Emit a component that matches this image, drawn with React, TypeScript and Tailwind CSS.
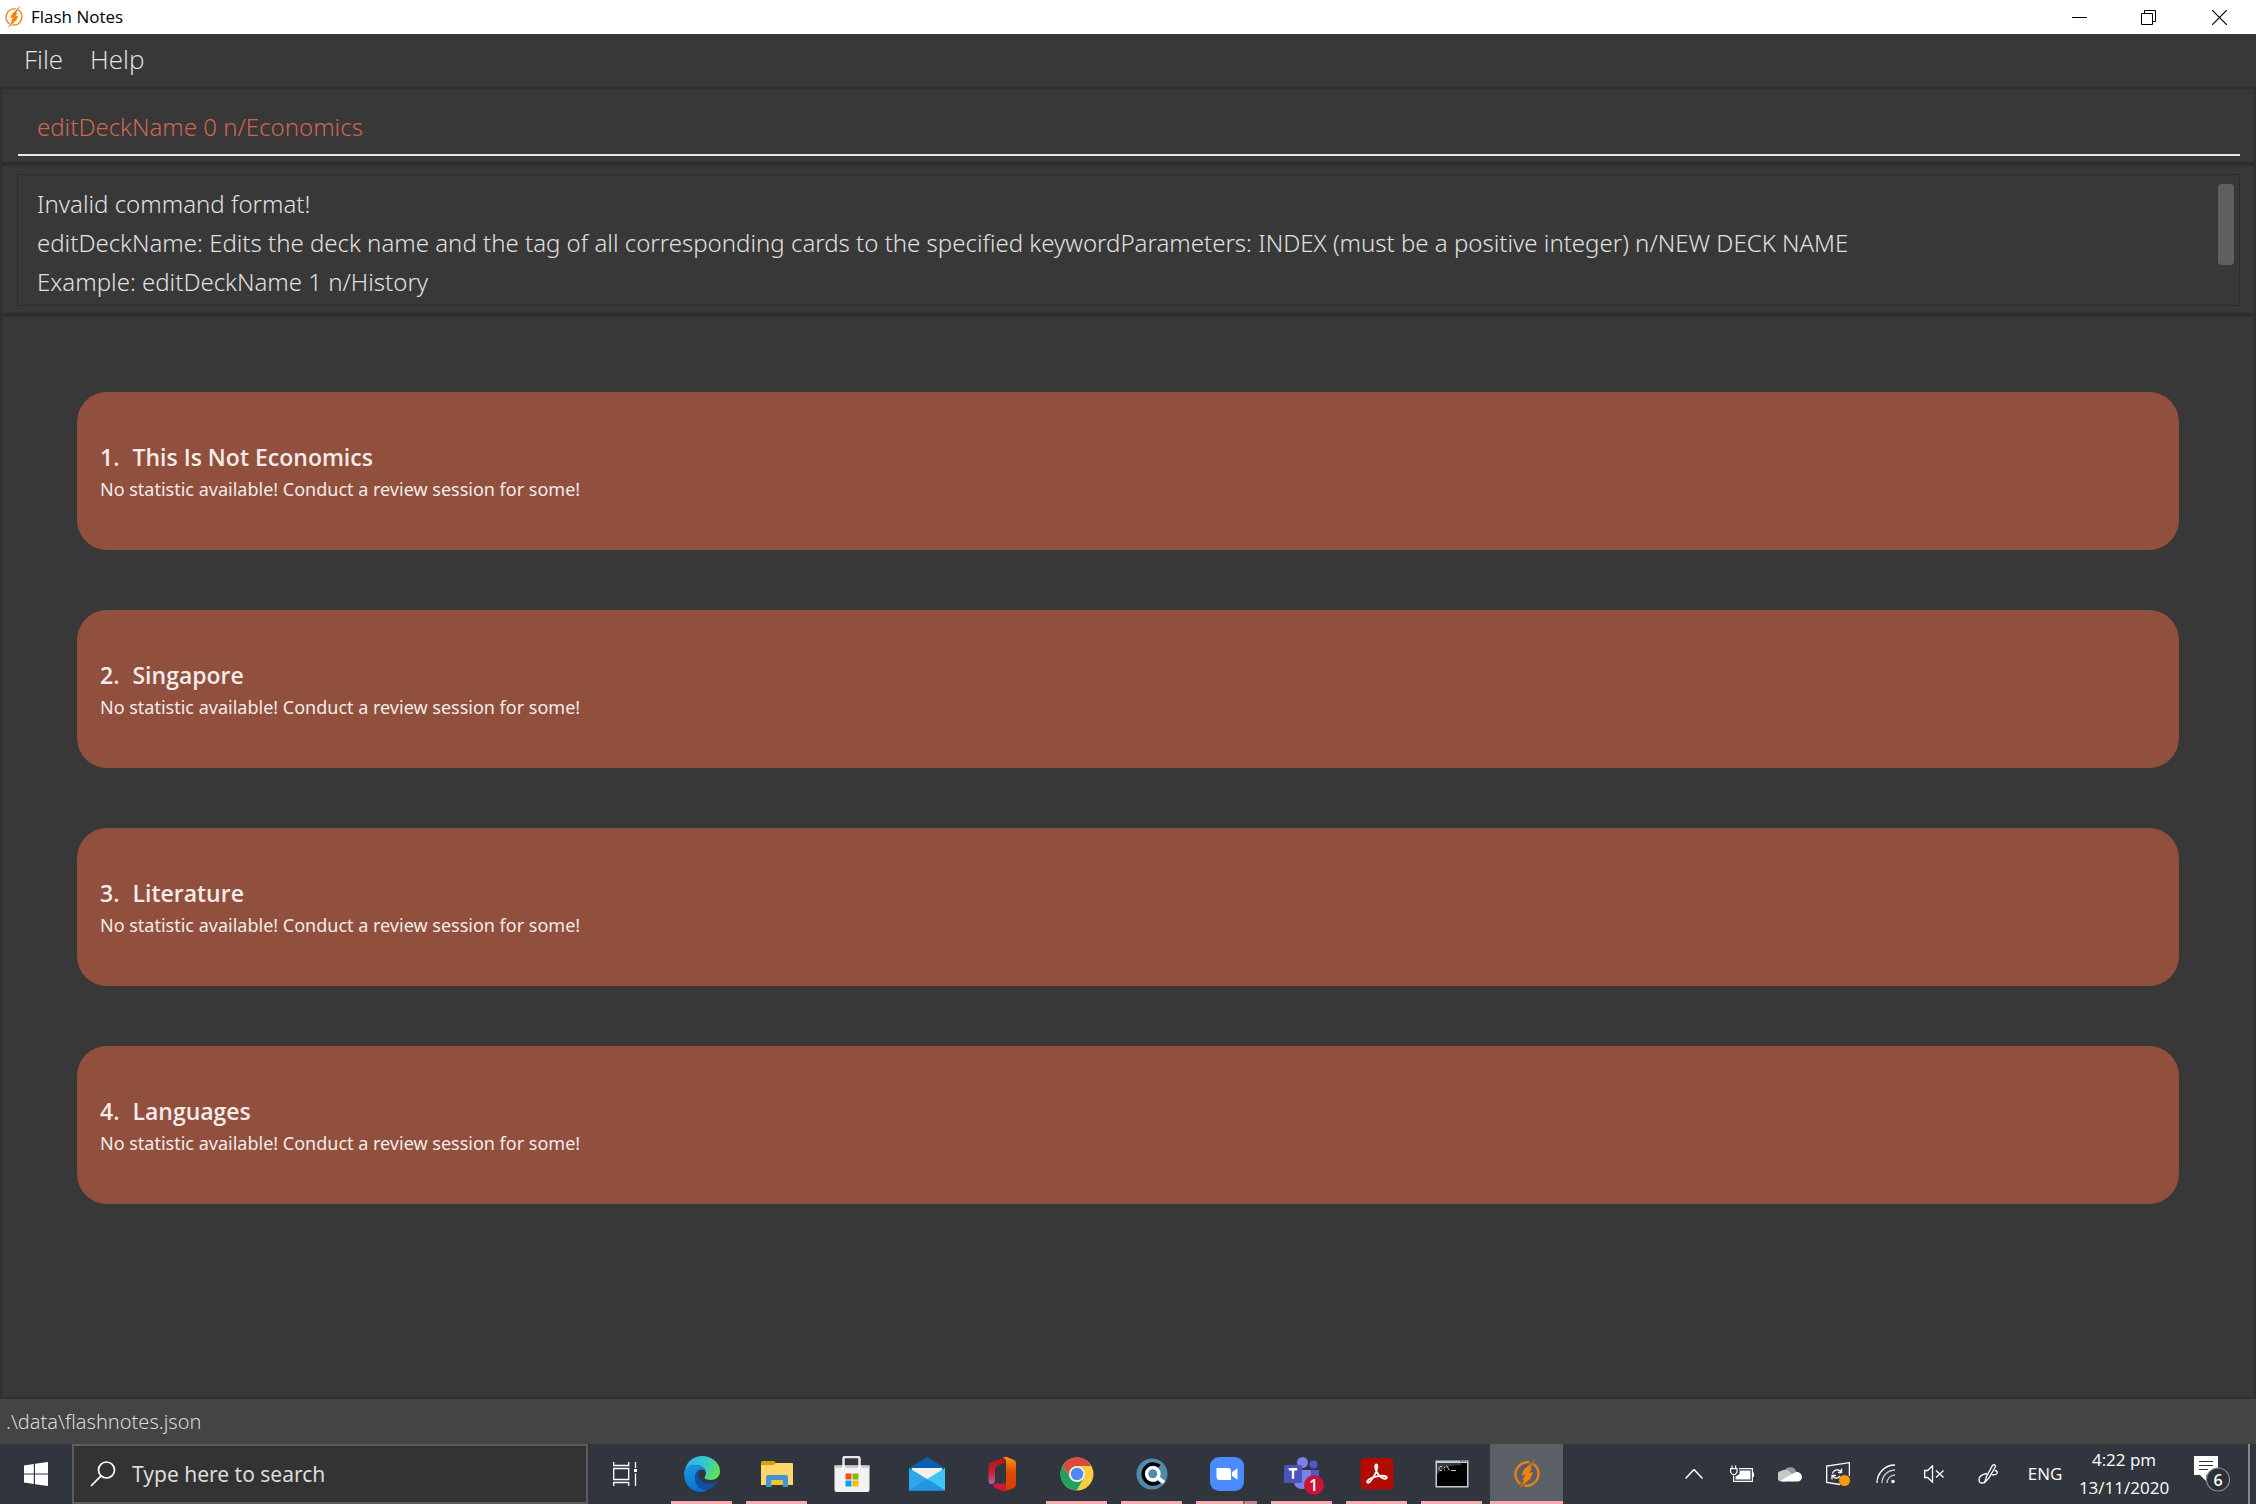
import type { ReactNode } from "react";

const decks = ["This Is Not Economics", "Singapore", "Literature", "Languages"];

const result = [
  "Invalid command format!",
  "editDeckName: Edits the deck name and the tag of all corresponding cards to the specified keywordParameters: INDEX (must be a positive integer) n/NEW DECK NAME",
  "Example: editDeckName 1 n/History",
].join("\n");

function FlashLogo({ className }: { className: string }) {
  return (
    <svg viewBox="0 0 28 32" className={className} aria-hidden="true">
      <path d="M16.500 4.400A12 12 0 0 0 7.500 26M20.500 6A12 12 0 0 1 11.500 27.600" fill="none" stroke="#f5820b" strokeWidth="2.200" />
      <path d="M22.500 1 11 11.500 8.600 17.500 12.500 16.800 9.400 22 11.500 21.600 6 31 17.600 20.200 20 14.200 16.200 15 19 10 16.900 10.300Z" fill="#f5820b" />
      <path d="M22.500 1 16.500 7.500M11.500 24.500 6 31" stroke="#9c5a1e" strokeWidth="0.900" />
    </svg>
  );
}

function EdgeIcon() {
  return (
    <svg viewBox="0 0 36 36" className="size-9" aria-hidden="true">
      <defs>
        <linearGradient id="edgeTop" x1="0" y1="0.300" x2="1" y2="0.600">
          <stop offset="0" stopColor="#2fb2ee" />
          <stop offset="0.550" stopColor="#35c9c9" />
          <stop offset="1" stopColor="#66e34c" />
        </linearGradient>
        <linearGradient id="edgeLow" x1="0" y1="0" x2="0.400" y2="1">
          <stop offset="0" stopColor="#1b9de2" />
          <stop offset="1" stopColor="#0a6fd0" />
        </linearGradient>
      </defs>
      <path d="M1 14C3 5 10 0 18 0c10 0 18 7 18 15 0 6-4.500 9-9.500 9-3.500 0-6-1-6-2.500 0-1 1.500-1.700 1.500-4.500C22 12 17 9 11 9 6 9 3 11 1 14Z" fill="url(#edgeTop)" />
      <path d="M0 18C0 12 5 9 11 9c6 0 11 3.500 11 8 0-2-2-3.500-4.500-3.500C14 13.500 11 17 11 21.500c0 7 5.500 12.500 12 12.500-1.500 1.200-3.500 2-6 2C7 36 0 28 0 18Z" fill="url(#edgeLow)" />
      <path d="M17.500 13.500C14 13.500 11 17 11 21.500 11 29 17 35 23 34c4-1 8-4 10-7.500.3-.6-.3-.9-.8-.6C25 29.500 14.500 26 14.500 18.500c0-2 1.200-4 3-5Z" fill="#11509f" />
    </svg>
  );
}

function FolderIcon() {
  return (
    <svg viewBox="0 0 32 28" className="h-7 w-8" aria-hidden="true">
      <path d="M0 1.500Q0 1 1 1h12l2 2v4H0Z" fill="#dd9b06" />
      <path d="M0 5h12.500l2.500-2h16q1 0 1 1v21H0Z" fill="#ffd768" />
      <path d="M5 27V17q0-2 2-2h18q2 0 2 2v10h-5v-7H10.500v7Z" fill="#3f95d8" />
      <path d="M10.500 20H22v5H10.500Z" fill="#fdc12f" />
    </svg>
  );
}

function StoreIcon() {
  return (
    <svg viewBox="0 0 36 36" className="size-9" aria-hidden="true">
      <path d="M9.500 11V3q0-2 2-2h12q2 0 2 2v8" fill="none" stroke="#e9e9e9" strokeWidth="2.500" />
      <path d="M.5 9.500h35V34q0 2-2 2h-31q-2 0-2-2Z" fill="#f3f3f3" />
      <path d="M.5 9.500h35V12H.5Z" fill="#cfcfcf" />
      <path d="M8.300 9.500h2.500V13H8.300ZM24.300 9.500h2.500V13h-2.500Z" fill="#fff" />
      <path d="M11.500 17.500h6v6h-6Z" fill="#f1511b" />
      <path d="M18.500 17.500h6v6h-6Z" fill="#80bb03" />
      <path d="M11.500 24.500h6v6h-6Z" fill="#00a3ee" />
      <path d="M18.500 24.500h6v6h-6Z" fill="#fdb900" />
    </svg>
  );
}

function MailIcon() {
  return (
    <svg viewBox="0 0 36 34" className="h-[34px] w-9" aria-hidden="true">
      <path d="M0 11 18 0l18 11v4H0Z" fill="#0a5fae" />
      <path d="M3 11h30v6L18 25 3 17Z" fill="#f1f1f1" />
      <path d="M0 11v22.500h36L18 22Z" fill="#2ea6e8" />
      <path d="M36 11v22.500L18 22Z" fill="#3fc4f5" />
      <path d="M0 33.500 18 22l18 11.500Z" fill="#1f96e2" />
    </svg>
  );
}

function OfficeIcon() {
  return (
    <svg viewBox="0 0 28 34" className="h-[34px] w-7" aria-hidden="true">
      <defs>
        <linearGradient id="offL" x1="0" y1="0" x2="0" y2="1">
          <stop offset="0" stopColor="#b3130f" />
          <stop offset="0.600" stopColor="#c8243a" />
          <stop offset="1" stopColor="#b564b5" />
        </linearGradient>
        <linearGradient id="offR" x1="0" y1="0" x2="0" y2="1">
          <stop offset="0" stopColor="#f99b06" />
          <stop offset="0.450" stopColor="#e14a05" />
          <stop offset="1" stopColor="#d83b01" />
        </linearGradient>
      </defs>
      <path d="M17 0 4 5Q.5 6.500.5 10v13.500Q.5 27 3 27q4 0 4-4V12q0-2 2-3l8-3.500Z" fill="url(#offL)" />
      <path d="M15 0q2.500-.5 5 .5l5 2q3 1.200 3 4V27q0 3-3 4.200l-5 2q-3 1-5 .8 3-1 3-4V4q0-2-3-4Z" fill="url(#offR)" />
      <path d="M6 26.500h12V31q0 2.500-3.500 3L7 31q-2.500-1.500-1-4.500Z" fill="#d0173a" />
    </svg>
  );
}

function ChromeIcon() {
  return (
    <svg viewBox="0 0 34 34" className="size-[34px]" aria-hidden="true">
      <circle cx="17" cy="17" r="16.500" fill="#fccd41" />
      <path d="M2.700 8.700A16.500 16.500 0 0 1 31.300 9H17a8 8 0 0 0-7.200 11.500Z" fill="#dc4a3e" />
      <path d="M2.700 8.700A16.500 16.500 0 0 0 16.500 33.500L24 20.700A8 8 0 0 1 9.900 20.900Z" fill="#1ca261" />
      <circle cx="17" cy="17" r="7.800" fill="#f1f1f1" />
      <circle cx="17" cy="17" r="6.200" fill="#4a8af4" />
    </svg>
  );
}

function SearchCIcon() {
  return (
    <svg viewBox="0 0 32 32" className="size-8" aria-hidden="true">
      <circle cx="16" cy="16" r="15.500" fill="#528aae" />
      <path d="M23.500 8.200A10 10 0 1 0 23.500 23.800" fill="none" stroke="#000" strokeWidth="3.600" />
      <circle cx="16.800" cy="15.800" r="6.200" fill="none" stroke="#fff" strokeWidth="3.400" />
      <path d="m21.500 19.500 6.500 5" stroke="#fff" strokeWidth="3.600" />
    </svg>
  );
}

function ZoomIcon() {
  return (
    <svg viewBox="0 0 34 34" className="size-[34px]" aria-hidden="true">
      <rect width="34" height="34" rx="9" fill="#4a8cff" />
      <path d="M6.500 11H18q3 0 3 3v9H9.500q-3 0-3-3ZM22 15.300l5.500-4v11.400l-5.500-4Z" fill="#fff" />
    </svg>
  );
}

function TeamsIcon() {
  return (
    <svg viewBox="0 0 36 34" className="h-[34px] w-9" aria-hidden="true">
      <circle cx="18.500" cy="5.500" r="5.500" fill="#7b83eb" />
      <circle cx="29.500" cy="7.500" r="4" fill="#5059c9" />
      <path d="M25 13h10v9q0 5-5 5h-5Z" fill="#5059c9" />
      <path d="M10 13h17v11q0 8-8.500 8T10 24Z" fill="#7b83eb" />
      <rect y="8" width="18" height="18" rx="1.500" fill="#4b53bc" />
      <path d="M4.800 12.300h8.400M9 12.300v9.500" stroke="#fff" strokeWidth="2.400" />
    </svg>
  );
}

function AcrobatIcon() {
  return (
    <svg viewBox="0 0 34 32" className="h-8 w-[34px]" aria-hidden="true">
      <rect x="0.500" width="33" height="31.500" rx="4.500" fill="#b30b00" />
      <path d="M16.500 6.500c-2 0-1.500 4.500.5 8 2.500 4.500 6.500 7 9 6 2.500-1.500-1-3.200-6-2.600-5 .6-10.500 2.200-12.500 5-1 2 .8 2.600 2.500.7 3-3.300 6-8.600 7-13 .5-2.600.3-4.100-.5-4.100Z" fill="none" stroke="#fff" strokeWidth="1.900" />
    </svg>
  );
}

function TerminalIcon() {
  return (
    <svg viewBox="0 0 34 28" className="h-7 w-[34px]" aria-hidden="true">
      <rect x="0.500" y="0.500" width="33" height="27" fill="#c3ccd2" />
      <path d="M2 3h30v23H2Z" fill="#000" />
      <path d="M2 3h24v2C16 5 7 8 2 15Z" fill="#3c3c3c" />
      <path d="M25 1.500h2m1 0h2m1 0h1" stroke="#51708c" />
      <path d="M7 6.500H5l-1 1v2l1 1h2M9.500 7v1m0 1.500v1M11.500 5.500l3 5M16 10.500h5" fill="none" stroke="#c8c8c8" />
    </svg>
  );
}

type Pin = { name: string; icon: ReactNode; open?: boolean; badge?: string; stacked?: boolean };

const pins: Pin[] = [
  { name: "Microsoft Edge", icon: <EdgeIcon />, open: true },
  { name: "File Explorer", icon: <FolderIcon />, open: true },
  { name: "Microsoft Store", icon: <StoreIcon /> },
  { name: "Mail", icon: <MailIcon /> },
  { name: "Office", icon: <OfficeIcon /> },
  { name: "Chrome", icon: <ChromeIcon />, open: true },
  { name: "Lookup", icon: <SearchCIcon />, open: true },
  { name: "Zoom", icon: <ZoomIcon />, open: true, stacked: true },
  { name: "Teams", icon: <TeamsIcon />, open: true, badge: "1" },
  { name: "Acrobat Reader", icon: <AcrobatIcon />, open: true },
  { name: "Command Prompt", icon: <TerminalIcon />, open: true },
];

function TitleBar() {
  return (
    <header className="flex h-[34px] shrink-0 items-center bg-white font-normal text-black">
      <FlashLogo className="ml-1 h-[22px] w-5" />
      <h1 className="ml-[7px] flex-1 text-[17px]">Flash Notes</h1>
      <button aria-label="Minimise" className="flex h-full w-[69px] items-center justify-center">
        <svg viewBox="0 0 15 15" className="size-[15px]"><path d="M0 7.500h15" stroke="#000" /></svg>
      </button>
      <button aria-label="Restore" className="flex h-full w-[69px] items-center justify-center">
        <svg viewBox="0 0 15 15" className="size-[15px]"><path d="M.5 3.500h11v11H.5ZM3.500 3.500v-3h11v11h-3" fill="none" stroke="#000" /></svg>
      </button>
      <button aria-label="Close" className="flex h-full w-[73px] items-center justify-center">
        <svg viewBox="0 0 15 15" className="size-[15px]"><path d="m0 0 15 15M15 0 0 15" stroke="#000" strokeWidth="1.200" /></svg>
      </button>
    </header>
  );
}

function Taskbar() {
  return (
    <footer className="flex h-[60px] shrink-0 bg-[#31363e] font-normal text-white">
      <button aria-label="Start" className="flex w-[72px] items-center justify-center">
        <svg viewBox="0 0 24 24" className="size-6" fill="#fff">
          <path d="M0 3.400 9.800 2v9.500H0ZM11 1.800 24 0v11.500H11ZM0 12.500h9.800V22L0 20.600ZM11 12.500h13V24l-13-1.800Z" />
        </svg>
      </button>
      <label className="flex w-[516px] items-center gap-4 border-2 border-[#5c5c5c] bg-[#333333] pl-4">
        <svg viewBox="0 0 26 26" className="size-[26px] shrink-0" fill="none" stroke="#fff" strokeWidth="1.700">
          <circle cx="16.500" cy="9" r="8" />
          <path d="M11 14.800 1 25" />
        </svg>
        <input aria-label="Search" placeholder="Type here to search" className="w-full bg-transparent pt-0.5 font-['Noto_Sans',sans-serif] text-[21px] outline-none placeholder:text-[#dcdcdc]" />
      </label>
      <button aria-label="Task View" className="mr-1 flex w-[73px] items-center justify-center">
        <svg viewBox="0 0 24 24" className="size-6" fill="none" stroke="#fff" strokeWidth="1.300">
          <path d="M.7 0v3.500h15V0M.7 6.500h15v11H.7ZM.7 24v-3.500h15V24M22.500 0v6M22.500 11.500V24" />
          <path d="M21 7h3v3h-3Z" fill="#fff" stroke="none" />
        </svg>
      </button>
      <nav className="flex gap-0.5" aria-label="Pinned apps">
        {pins.map((p) => (
          <button key={p.name} aria-label={p.name} className="flex w-[73px] flex-col items-center">
            <span className="relative flex flex-1 items-center justify-center pt-0.5">
              {p.icon}
              {p.badge && (
                <span className="absolute right-[-4px] bottom-1.5 flex size-5 items-center justify-center rounded-full bg-[#cc1236] text-base font-semibold">
                  {p.badge}
                </span>
              )}
            </span>
            <span className={p.open ? "flex h-[3px] w-[61px] justify-end bg-[#f4abb0]" : "h-[3px]"}>
              {p.stacked && <span className="w-3.5 border-l-2 border-[#96686d] bg-[#c08a8e]" />}
            </span>
          </button>
        ))}
        <button aria-label="Flash Notes" className="flex w-[73px] flex-col items-center bg-[#5b6066]">
          <span className="flex flex-1 items-center pt-0.5">
            <FlashLogo className="h-8 w-7" />
          </span>
          <span className="h-[3px] w-full bg-[#f4abb0]" />
        </button>
      </nav>
      <div className="flex-1" />
      <div className="flex items-center text-white">
        <button aria-label="Show hidden icons" className="flex w-12 justify-center">
          <svg viewBox="0 0 18 10" className="h-2.5 w-[18px]" fill="none" stroke="#fff" strokeWidth="1.500"><path d="m.5 9.500 8.500-9 8.500 9" /></svg>
        </button>
        <button aria-label="Battery" className="flex w-12 justify-center">
          <svg viewBox="0 0 24 18" className="h-[18px] w-6" fill="none" stroke="#fff" strokeWidth="1.200">
            <path d="M9 3.600h13.400v12.800H3.600v-6M22.500 8h1v3.500h-1" />
            <path d="M9.500 5.500h11v9H5.500v-3L9.500 9Z" fill="#fff" stroke="none" />
            <path d="M2 .5v3M5.600.5v3M.6 3.600H7V7L5.200 9.500H2.400L.6 7Z" />
          </svg>
        </button>
        <button aria-label="OneDrive" className="flex w-12 justify-center">
          <svg viewBox="0 0 24 16" className="h-4 w-6">
            <path d="M6 6a6.500 6.500 0 0 1 12.500 0L15 11H6Z" fill="#9a9a9a" />
            <path d="M5 15.500A5 5 0 0 1 3 5q5-3 9 1l4 3-9 6.500Z" fill="#c8c8c8" />
            <path d="M3 14.500 16 7q3-2 6 0 3 3 1.500 6-1 2.500-4 2.500H5q-1.500 0-2-1Z" fill="#fff" />
          </svg>
        </button>
        <button aria-label="Updates" className="flex w-12 justify-center">
          <svg viewBox="0 0 24 24" className="size-6" fill="none" stroke="#fff" strokeWidth="1.300">
            <path d="M14 22.500.7 20.500V4L23.400.7V14" />
            <path d="M6.500 11.500q1.500-4 5.500-3.500 2 .3 3.300 2M15.500 6.500V10.500H12M14 14q-2 2.500-4.500 2-2-.5-3.200-2.500M6 17.500V13.500H10" />
            <circle cx="18.500" cy="18.500" r="5.500" fill="#ff9a0a" stroke="none" />
          </svg>
        </button>
        <button aria-label="Wi-Fi" className="flex w-12 justify-center">
          <svg viewBox="0 0 20 20" className="size-5" fill="none" stroke="#fff" strokeWidth="1.300">
            <path d="M1 19A18 18 0 0 1 19 1" />
            <path d="M6 19A13 13 0 0 1 19 6M11 19a8 8 0 0 1 8-8" stroke="#c9cbce" />
            <circle cx="17" cy="17.500" r="1.700" fill="#fff" stroke="none" />
          </svg>
        </button>
        <button aria-label="Muted" className="flex w-12 justify-center">
          <svg viewBox="0 0 20 18" className="h-[18px] w-5" fill="none" stroke="#fff" strokeWidth="1.300">
            <path d="M.7 5.500h3L8.500.8v16.400L3.700 12.500h-3ZM12 5.500l7.500 7M19.500 5.500l-7.500 7" />
          </svg>
        </button>
        <button aria-label="Windows Ink" className="flex w-[60px] justify-center">
          <svg viewBox="0 0 20 20" className="size-5" fill="none" stroke="#fff" strokeWidth="1.300">
            <path d="M7 18 8.500 12.500 14.500 1.500Q16-.2 17 1.200 18 2 17 3.500L10.500 14.500Z" />
            <path d="M9 9.500Q1 11 1 15.500 1 19.500 4.500 19 6.500 18.700 7.500 17M13.500 10.500Q19 11.500 19.300 8.500 19.300 6.500 16.500 6.500" />
          </svg>
        </button>
        <button className="w-[54px] text-center text-[17px]">ENG</button>
        <button className="w-[104px] text-center text-[17px] leading-7">
          <time className="block">4:22 pm</time>
          <time className="block">13/11/2020</time>
        </button>
        <button aria-label="Notifications" className="relative ml-[18px] h-9 w-9">
          <svg viewBox="0 0 36 36" className="size-9">
            <path d="M0 0h24v19H12v6l-6-6H0Z" fill="#fff" />
            <path d="M5 5.500h14M5 9.500h14M5 13.500h9" stroke="#31363e" strokeWidth="1.200" />
            <circle cx="24" cy="23.500" r="11.500" fill="#2d3036" stroke="#8c8f93" strokeWidth="1.200" />
          </svg>
          <span className="absolute right-0 bottom-0 flex size-6 items-center justify-center text-base font-semibold">6</span>
        </button>
        <span className="ml-[18px] h-[60px] w-0.5 bg-[#85888c]" />
        <button aria-label="Show desktop" className="h-[60px] w-1.5" />
      </div>
    </footer>
  );
}

export default function App() {
  return (
    <div className="flex min-h-screen flex-col bg-[#383838] font-['Open_Sans',sans-serif] font-light text-[#e0e0e0]">
      <TitleBar />
      <nav className="flex h-[53px] shrink-0 items-center gap-[27px] pb-0.5 pl-6 text-[26px] text-[#e6e6e6]" aria-label="Menu">
        <button>File</button>
        <button>Help</button>
      </nav>
      <section className="flex shrink-0 flex-col border-2 border-b-[#2b2b2b] border-[#303030] pt-3 pr-3.5 pb-1.5 pl-4">
        <input
          aria-label="Command"
          defaultValue="editDeckName 0 n/Economics"
          className="h-[55px] border-b-2 border-[#e8e8e8] bg-transparent px-[19px] pb-0.5 font-['Noto_Sans',sans-serif] text-2xl text-[#d06651] outline-none"
        />
      </section>
      <section className="shrink-0 border-2 border-b-[#2b2b2b] border-[#303030] pt-2 pr-3.5 pb-[7px] pl-[15px]">
        <div className="flex border border-[#2c2c2c] pt-[9px] pr-[5px] pl-[19px]">
          <textarea
            aria-label="Result"
            readOnly
            rows={3}
            value={result}
            className="h-[121px] flex-1 resize-none overflow-hidden bg-transparent font-['Noto_Sans',sans-serif] text-2xl leading-[39px] outline-none"
          />
          <span className="h-[81px] w-4 rounded-sm bg-[#5f5f5f]" />
        </div>
      </section>
      <main className="flex-1 border-2 border-[#303030] px-[75px] pt-[75px]">
        <ul className="flex flex-col gap-[60px]">
          {decks.map((name, i) => (
            <li key={name} className="flex h-[158px] flex-col justify-center rounded-[30px] bg-[#914f3e] pt-1 pl-[23px] text-[#f5ece9]">
              <h2 className="flex gap-[13px] text-[23px] leading-8 font-semibold">
                <span>{i + 1}.</span>
                <span>{name}</span>
              </h2>
              <p className="font-['Noto_Sans',sans-serif] text-[18px] leading-8 font-normal">No statistic available! Conduct a review session for some!</p>
            </li>
          ))}
        </ul>
      </main>
      <div className="flex h-[45px] shrink-0 items-center bg-[#444444] pl-1.5 font-['Noto_Sans',sans-serif] text-xl text-[#d8d8d8]">.\data\flashnotes.json</div>
      <Taskbar />
    </div>
  );
}
